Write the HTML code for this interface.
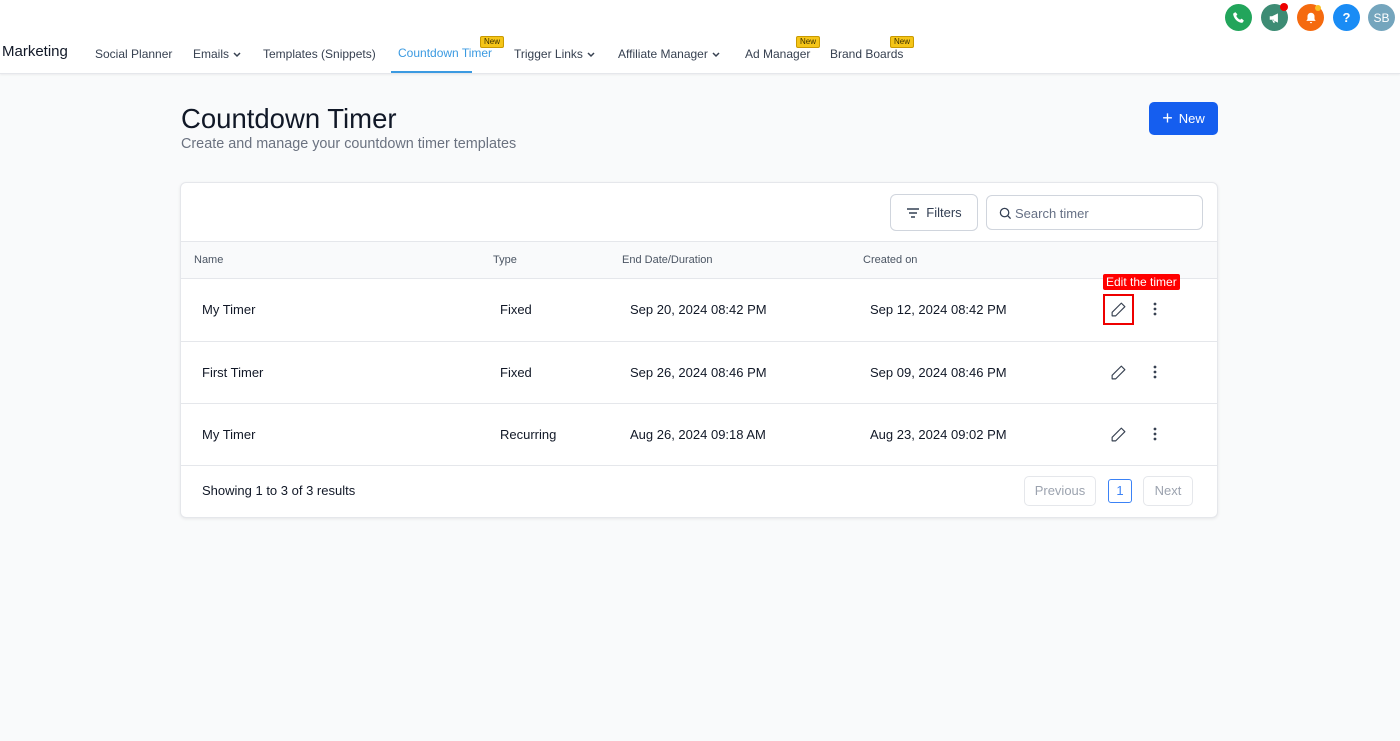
<!DOCTYPE html>
<html><head><style>
*{box-sizing:border-box;margin:0;padding:0}
body{width:1400px;height:741px;background:#f9fafb;font-family:"Liberation Sans",sans-serif;position:relative;overflow:hidden;color:#111827}
.top{position:absolute;left:0;top:0;width:1400px;height:74px;background:#fff;border-bottom:1px solid #e5e7eb;box-shadow:0 1px 2px rgba(0,0,0,.06)}
.a{position:absolute;font-size:12px;color:#374151;top:47px}
.a svg{vertical-align:middle;margin-left:4px}
.badge{position:absolute;background:#f5c518;border:1px solid #c99a00;color:#3b2f00;font-size:8px;padding:0 3px;border-radius:2px;line-height:10px}
.ic{position:absolute;top:4px;width:27px;height:27px;border-radius:50%;color:#fff;font-size:13px;font-weight:bold;display:flex;align-items:center;justify-content:center}
.card{position:absolute;left:180px;top:182px;width:1038px;height:336px;background:#fff;border:1px solid #e5e7eb;border-radius:6px;box-shadow:0 1px 3px rgba(0,0,0,.08)}
.row{position:absolute;left:0;width:1036px;border-top:1px solid #e5e7eb;font-size:13px}
.row span{position:absolute}
.th{font-size:11px;color:#4b5563}
.pen{position:absolute;left:929px;top:22px}
.dots{position:absolute;left:966px;top:22px}
</style></head><body>
<div class="top">
<div style="position:absolute;left:2px;top:43px;font-size:15px;color:#111827">Marketing</div>
<div class="a" style="left:95px">Social Planner</div>
<div class="a" style="left:193px">Emails<svg width="8" height="6" viewBox="0 0 8 6"><path d="M1 1l3 3 3-3" stroke="#374151" stroke-width="1.5" fill="none"/></svg></div>
<div class="a" style="left:263px">Templates (Snippets)</div>
<div class="a" style="left:398px;top:46px;color:#3b9ae1">Countdown Timer</div>
<div style="position:absolute;left:391px;top:71px;width:81px;height:2px;background:#3b9ae1"></div>
<div class="badge" style="left:480px;top:36px">New</div>
<div class="a" style="left:514px">Trigger Links<svg width="8" height="6" viewBox="0 0 8 6"><path d="M1 1l3 3 3-3" stroke="#374151" stroke-width="1.5" fill="none"/></svg></div>
<div class="a" style="left:618px">Affiliate Manager<svg width="8" height="6" viewBox="0 0 8 6"><path d="M1 1l3 3 3-3" stroke="#374151" stroke-width="1.5" fill="none"/></svg></div>
<div class="a" style="left:745px">Ad Manager</div>
<div class="badge" style="left:796px;top:36px">New</div>
<div class="a" style="left:830px">Brand Boards</div>
<div class="badge" style="left:890px;top:36px">New</div>
<div class="ic" style="left:1225px;background:#22a55b"><svg width="13" height="13" viewBox="0 0 24 24"><path d="M6 2l4 4-2 3c1 3 4 6 7 7l3-2 4 4-3 4C10 21 3 14 2 5z" fill="#fff"/></svg></div>
<div class="ic" style="left:1261px;background:#3d8c74"><svg width="14" height="14" viewBox="0 0 24 24"><path d="M3 9h4l10-5v16L7 15H3z M7 15l2 5h3l-2-5" fill="#fff"/></svg></div>
<div style="position:absolute;left:1280px;top:3px;width:8px;height:8px;border-radius:50%;background:#e00"></div>
<div class="ic" style="left:1297px;background:#f56a0f"><svg width="14" height="14" viewBox="0 0 24 24"><path d="M12 3a6 6 0 00-6 6v5l-2 3h16l-2-3V9a6 6 0 00-6-6zM10 19a2 2 0 004 0z" fill="#fff"/></svg></div>
<div style="position:absolute;left:1315px;top:5px;width:6px;height:6px;border-radius:50%;background:#fbbf24"></div>
<div class="ic" style="left:1333px;background:#1a8cf5">?</div>
<div class="ic" style="left:1368px;background:#74a5bd;font-weight:normal;font-size:12px">SB</div>
</div>
<div style="position:absolute;left:181px;top:103px;font-size:27.5px;color:#111827">Countdown Timer</div>
<div style="position:absolute;left:181px;top:136px;font-size:14.4px;color:#6b7280">Create and manage your countdown timer templates</div>
<div style="position:absolute;left:1149px;top:102px;width:69px;height:33px;background:#155eef;border-radius:5px;color:#fff;font-size:13px;display:flex;align-items:center;justify-content:center"><span style="font-size:18px;margin-right:6px">+</span>New</div>
<div class="card">
<div style="position:absolute;left:709px;top:11px;width:88px;height:37px;border:1px solid #d0d5dd;border-radius:6px;font-size:13px;color:#344054;display:flex;align-items:center;justify-content:center"><svg width="14" height="12" viewBox="0 0 14 12" style="margin-right:6px"><path d="M1 2h12M3 6h8M5 10h4" stroke="#344054" stroke-width="1.5"/></svg>Filters</div>
<div style="position:absolute;left:805px;top:12px;width:217px;height:35px;border:1px solid #d0d5dd;border-radius:6px;font-size:13px;color:#667085;padding:10px 0 0 12px"><svg width="13" height="13" viewBox="0 0 14 14" style="vertical-align:-2px;margin-right:3px"><circle cx="6" cy="6" r="4.5" stroke="#344054" stroke-width="1.4" fill="none"/><path d="M9.5 9.5l3 3" stroke="#344054" stroke-width="1.4"/></svg>Search timer</div>
<div class="row th" style="top:58px;height:37px;background:#f9fafb"><span style="left:13px;top:12px">Name</span><span style="left:312px;top:12px">Type</span><span style="left:441px;top:12px">End Date/Duration</span><span style="left:682px;top:12px">Created on</span></div>
<div class="row" style="top:95px;height:63px"><span style="left:21px;top:23px">My Timer</span><span style="left:319px;top:23px">Fixed</span><span style="left:449px;top:23px">Sep 20, 2024 08:42 PM</span><span style="left:689px;top:23px">Sep 12, 2024 08:42 PM</span>
<svg class="pen" width="17" height="17" viewBox="0 0 24 24"><path d="M16 3l5 5L8 21H3v-5z" stroke="#374151" stroke-width="1.6" fill="none" stroke-linejoin="round"/></svg>
<svg class="dots" width="16" height="16" viewBox="0 0 16 16"><circle cx="8" cy="3" r="1.4" fill="#374151"/><circle cx="8" cy="8" r="1.4" fill="#374151"/><circle cx="8" cy="13" r="1.4" fill="#374151"/></svg>
<span style="left:922px;top:-5px;background:#f00;color:#fff;font-size:12px;padding:1px 3px;border-radius:2px">Edit the timer</span>
<span style="left:922px;top:15px;width:31px;height:31px;border:2px solid #e00"></span></div>
<div class="row" style="top:158px;height:62px"><span style="left:21px;top:23px">First Timer</span><span style="left:319px;top:23px">Fixed</span><span style="left:449px;top:23px">Sep 26, 2024 08:46 PM</span><span style="left:689px;top:23px">Sep 09, 2024 08:46 PM</span>
<svg class="pen" width="17" height="17" viewBox="0 0 24 24"><path d="M16 3l5 5L8 21H3v-5z" stroke="#374151" stroke-width="1.6" fill="none" stroke-linejoin="round"/></svg>
<svg class="dots" width="16" height="16" viewBox="0 0 16 16"><circle cx="8" cy="3" r="1.4" fill="#374151"/><circle cx="8" cy="8" r="1.4" fill="#374151"/><circle cx="8" cy="13" r="1.4" fill="#374151"/></svg></div>
<div class="row" style="top:220px;height:62px"><span style="left:21px;top:23px">My Timer</span><span style="left:319px;top:23px">Recurring</span><span style="left:449px;top:23px">Aug 26, 2024 09:18 AM</span><span style="left:689px;top:23px">Aug 23, 2024 09:02 PM</span>
<svg class="pen" width="17" height="17" viewBox="0 0 24 24"><path d="M16 3l5 5L8 21H3v-5z" stroke="#374151" stroke-width="1.6" fill="none" stroke-linejoin="round"/></svg>
<svg class="dots" width="16" height="16" viewBox="0 0 16 16"><circle cx="8" cy="3" r="1.4" fill="#374151"/><circle cx="8" cy="8" r="1.4" fill="#374151"/><circle cx="8" cy="13" r="1.4" fill="#374151"/></svg></div>
<div class="row" style="top:282px;height:52px"><span style="left:21px;top:17px">Showing 1 to 3 of 3 results</span>
<span style="left:843px;top:10px;width:72px;height:30px;border:1px solid #e5e7eb;border-radius:5px;color:#9ca3af;text-align:center;line-height:28px">Previous</span>
<span style="left:927px;top:13px;width:24px;height:24px;border:1px solid #3b82f6;border-radius:3px;color:#3b82f6;text-align:center;line-height:22px">1</span>
<span style="left:962px;top:10px;width:50px;height:30px;border:1px solid #e5e7eb;border-radius:5px;color:#9ca3af;text-align:center;line-height:28px">Next</span></div>
</div>
</body></html>
